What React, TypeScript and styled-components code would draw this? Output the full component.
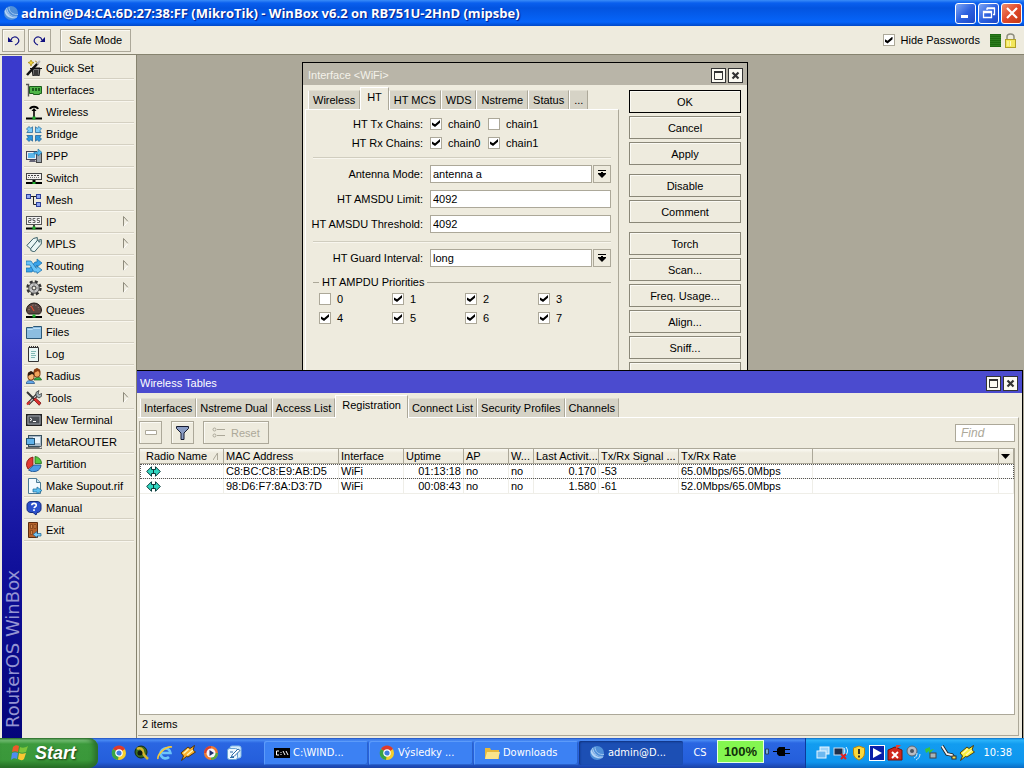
import React from "react";
import styled, { createGlobalStyle, css } from "styled-components";

const face = "#eeebde";
const faceDark = "#d6d3c6";
const line = "#aca899";
const canvas = "#aca899";

const Global = createGlobalStyle`
  * { box-sizing: border-box; }
  body {
    margin: 0;
    font-family: "Liberation Sans", Arial, sans-serif;
    font-size: 11px;
    line-height: 14px;
    color: #000;
    background: ${face};
  }
  button, input, select { font: inherit; color: inherit; margin: 0; }
  ul { list-style: none; margin: 0; padding: 0; }
`;

/* ---------- shell ---------- */

const Screen = styled.div`
  height: 100vh;
  display: flex;
  flex-direction: column;
  background: ${face};
  overflow: hidden;
`;

const TitleBar = styled.header`
  flex: none;
  height: 26px;
  display: flex;
  align-items: center;
  gap: 2px;
  padding: 0 2px 0 3px;
  color: #fff;
  font: bold 13px/18px "Open Sans", sans-serif;
  text-shadow: 1px 1px 1px #0a1883;
  background: linear-gradient(#3a8cf8 0, #0a5fee 3px, #0354e0 8px, #0560f2 18px, #0664fa 22px, #0148c8 26px);
`;

const AppTitle = styled.h1`
  flex: 1;
  margin: 0;
  font: inherit;
  white-space: nowrap;
`;

const XpButton = styled.button<{ $close?: boolean }>`
  width: 21px;
  height: 21px;
  padding: 0;
  display: grid;
  place-items: center;
  border: 1px solid #fff;
  border-radius: 3px;
  background: ${(p) =>
    p.$close
      ? "linear-gradient(135deg, #f0906c, #e0482a 50%, #c23a14)"
      : "linear-gradient(135deg, #7ea6f4, #2d62e0 50%, #1c48c8)"};
`;

const XpButtons = styled.div`
  display: flex;
  gap: 2px;
`;

const Toolbar = styled.div`
  flex: none;
  height: 29px;
  display: flex;
  align-items: center;
  gap: 3px;
  padding: 0 7px 0 2px;
  border-bottom: 1px solid #86836f;
`;

const ToolButton = styled.button<{ $wide?: boolean; $dim?: boolean }>`
  height: 23px;
  min-width: 23px;
  padding: ${(p) => (p.$wide ? "0 8px" : "0")};
  display: flex;
  align-items: center;
  justify-content: center;
  gap: 6px;
  white-space: nowrap;
  color: ${(p) => (p.$dim ? line : "#000")};
  background: ${face};
  border: 1px solid ${line};
  box-shadow: inset 1px 1px #fbfaf4;
`;

const Gap = styled.span`
  width: 3px;
`;

const Spacer = styled.span`
  flex: 1;
`;

const CheckLabel = styled.label`
  display: flex;
  align-items: center;
  gap: 6px;
  white-space: nowrap;
`;

const Check = styled.input.attrs({ type: "checkbox" })`
  appearance: none;
  flex: none;
  width: 12px;
  height: 12px;
  display: grid;
  place-items: center;
  border: 1px solid ${line};
  background: #fff;
  &:checked::before {
    content: "";
    width: 8px;
    height: 7px;
    background: #000;
    clip-path: polygon(0 35%, 38% 62%, 100% 0, 100% 38%, 38% 100%, 0 72%);
  }
`;

const Traffic = styled.span`
  width: 11px;
  height: 13px;
  margin-left: 7px;
  background: repeating-linear-gradient(#1d6a10 0 1px, #2c7c1e 1px 2px);
`;

const Workspace = styled.div`
  flex: 1;
  min-height: 0;
  display: flex;
`;

const Brand = styled.div`
  flex: none;
  width: 20px;
  margin: 1px 0 0 2px;
  padding: 0 0 0 2px;
  display: flex;
  align-items: flex-start;
  writing-mode: vertical-rl;
  background: linear-gradient(#3a3acc 0, #3a3acc 40%, #10109a 75%, #04047a 100%);
`;

const BrandText = styled.span`
  height: 100%;
  padding-top: 10px;
  transform: rotate(180deg);
  color: #9494d2;
  font: 18px/18px "DejaVu Sans", sans-serif;
`;

const Side = styled.nav`
  flex: none;
  width: 114px;
  padding: 2px 2px 0 2px;
`;

const Item = styled.a`
  height: 22px;
  display: flex;
  align-items: center;
  gap: 4px;
  padding: 0 5px 0 2px;
  color: #000;
  text-decoration: none;
  white-space: nowrap;
  border-bottom: 1px solid #d4d0c2;
  box-shadow: 0 1px #f8f6ee;
`;

const ItemText = styled.span`
  flex: 1;
`;

/* ---------- MDI windows ---------- */

const Desktop = styled.main`
  position: relative;
  flex: 1;
  min-width: 0;
  overflow: hidden;
  background: ${canvas};
  border-left: 1px solid #86836f;
`;

const windowFrame = css`
  position: absolute;
  display: flex;
  flex-direction: column;
  background: ${face};
`;

const DialogWindow = styled.section`
  ${windowFrame}
  left: 165px;
  top: 7px;
  width: 446px;
  border: 1px solid #000;
`;

const TablesWindow = styled.section`
  ${windowFrame}
  left: 0;
  right: 1px;
  top: 315px;
  bottom: 0;
  border-top: 1px solid #000;
  border-right: 1px solid #000;
`;

const WindowBar = styled.div<{ $active?: boolean }>`
  flex: none;
  height: 22px;
  display: flex;
  align-items: center;
  gap: 2px;
  padding: 2px 4px 0 ${(p) => (p.$active ? "3px" : "5px")};
  color: ${(p) => (p.$active ? "#fff" : "#f4f2ea")};
  background: ${(p) => (p.$active ? "#4b4bcf" : "#b9b5a8")};
`;

const WindowTitle = styled.h2`
  flex: 1;
  margin: 0;
  font: inherit;
`;

const WinButton = styled.button`
  width: 15px;
  height: 15px;
  padding: 0;
  display: grid;
  place-items: center;
  background: #fbfaf2;
  border: 1px solid #333;
`;

const TabRow = styled.div<{ $inset: number }>`
  flex: none;
  display: flex;
  align-items: flex-end;
  height: 24px;
  padding-left: ${(p) => p.$inset}px;
`;

const Tab = styled.button<{ $active?: boolean; $tight?: boolean }>`
  flex: none;
  height: ${(p) => (p.$active ? "23px" : "19px")};
  padding: 0 ${(p) => (p.$active ? 6 : p.$tight ? 3 : 4)}px ${(p) => (p.$active ? 5 : 0)}px;
  margin-bottom: ${(p) => (p.$active ? "-1px" : "0")};
  z-index: ${(p) => (p.$active ? 1 : 0)};
  white-space: nowrap;
  border: 0;
  border-top: 1px solid ${(p) => (p.$active ? "#fff" : "#e2dfd2")};
  border-right: 1px solid ${line};
  border-left: 1px solid #fff;
  background: ${(p) => (p.$active ? face : faceDark)};
`;

const DialogBody = styled.div`
  display: flex;
  gap: 10px;
  padding: 0 6px 0 2px;
`;

const DialogLeft = styled.div`
  flex: 1;
  min-width: 0;
  display: flex;
  flex-direction: column;
`;

const Panel = styled.div`
  flex: 1;
  padding: 4px 7px 0;
  border-top: 1px solid #fff;
  border-left: 1px solid #fff;
  border-right: 1px solid ${line};
`;

const FormRow = styled.div<{ $h: number }>`
  display: flex;
  align-items: center;
  gap: 7px;
  height: ${(p) => p.$h}px;
`;

const FormLabel = styled.label`
  flex: none;
  width: 110px;
  display: flex;
  justify-content: flex-end;
  white-space: nowrap;
`;

const Chains = styled.div`
  display: flex;
`;

const Chain = styled.div`
  width: 58px;
`;

const Rule = styled.hr`
  margin: 5px 0 2px;
  border: 0;
  height: 2px;
  border-top: 1px solid #d0cdbf;
  border-bottom: 1px solid #f8f6ee;
`;

const fieldBox = css`
  flex: 1;
  min-width: 0;
  height: 18px;
  padding: 0 2px;
  border: 1px solid ${line};
  border-radius: 0;
  background: #fff;
`;

const TextField = styled.input`
  ${fieldBox}
`;

const SelectField = styled.select`
  ${fieldBox}
  appearance: none;
`;

const Combo = styled.div`
  flex: 1;
  display: flex;
  gap: 1px;
`;

const DropButton = styled.button`
  width: 18px;
  height: 18px;
  padding: 0;
  display: grid;
  place-items: center;
  background: ${face};
  border: 1px solid ${line};
`;

const Priorities = styled.fieldset`
  min-width: 0;
  margin: 5px 0 0;
  padding: 0 0 0 6px;
  border: 0;
  border-top: 1px solid ${line};
  display: grid;
  grid-template-columns: repeat(3, 73px) 1fr;
`;

const Legend = styled.legend`
  padding: 0 3px;
`;

const PriorityCell = styled.div`
  height: 19px;
  display: flex;
  align-items: center;
`;

const ActionColumn = styled.div`
  flex: none;
  width: 112px;
  padding-top: 5px;
  display: flex;
  flex-direction: column;
  gap: 9px;
`;

const ActionGroup = styled.div`
  display: flex;
  flex-direction: column;
  gap: 3px;
`;

const ActionButton = styled.button<{ $main?: boolean }>`
  height: 23px;
  padding: 0;
  background: ${face};
  border: 1px solid ${(p) => (p.$main ? "#000" : "#8a8778")};
  box-shadow: inset 1px 1px #fbfaf4;
`;

const TablesBody = styled.div`
  flex: 1;
  min-height: 0;
  margin: 0 3px 2px 1px;
  display: flex;
  flex-direction: column;
  border-top: 1px solid #fff;
  border-right: 1px solid ${line};
  border-bottom: 1px solid ${line};
  padding: 3px 3px 0 1px;
`;

const TableTools = styled.div`
  display: flex;
  align-items: center;
  gap: 9px;
  height: 23px;
  margin-bottom: 4px;
`;

const FindField = styled.input`
  width: 60px;
  height: 18px;
  padding: 0 5px;
  border: 1px solid ${line};
  background: #fff;
  font-size: 12px;
  font-style: italic;
  &::placeholder { color: ${line}; opacity: 1; }
`;

const ListBox = styled.div`
  flex: 1;
  min-height: 0;
  overflow: hidden;
  background: #fff;
  border: 1px solid ${line};
`;

const Grid = styled.table`
  width: 100%;
  table-layout: fixed;
  border-spacing: 0;
`;

const Th = styled.th`
  height: 15px;
  padding: 0 0 0 2px;
  font-weight: normal;
  text-align: left;
  white-space: nowrap;
  overflow: hidden;
  text-overflow: ellipsis;
  background: linear-gradient(#fbfaf4, #eeebde 4px);
  border-right: 1px solid ${line};
  border-bottom: 1px solid ${line};
  svg { display: block; }
`;

const HeadSplit = styled.span`
  display: flex;
  justify-content: space-between;
  align-items: center;
  padding: 0 5px 0 4px;
`;

const Td = styled.td<{ $right?: boolean }>`
  height: 15px;
  padding: 0 2px;
  text-align: ${(p) => (p.$right ? "right" : "left")};
  white-space: nowrap;
  border-right: 1px solid #efeee8;
  border-bottom: 1px solid #efeee8;
`;

const Row = styled.tr<{ $focused?: boolean }>`
  ${(p) => p.$focused && "outline: 1px dotted #555; outline-offset: -1px;"}
`;

const Status = styled.div`
  flex: none;
  height: 20px;
  padding: 2px 3px;
`;

/* ---------- taskbar ---------- */

const Taskbar = styled.footer`
  flex: none;
  height: 30px;
  display: flex;
  align-items: stretch;
  color: #fff;
  font: 11px/14px "DejaVu Sans Condensed", "DejaVu Sans", sans-serif;
  background: linear-gradient(#1f4fc0 0, #4a8cf4 2px, #2a66e2 5px, #245edb 24px, #1941a5 30px);
`;

const Start = styled.button`
  width: 98px;
  padding: 0 0 0 10px;
  display: flex;
  align-items: center;
  gap: 6px;
  border: 0;
  border-radius: 0 9px 9px 0;
  color: #fff;
  font: italic bold 18px/22px "Liberation Sans", sans-serif;
  text-shadow: 1px 1px 2px #1a3a10;
  background: linear-gradient(#2b6e2b 0, #7cc67c 2px, #3c9a3c 6px, #3a983a 22px, #256f25 30px);
  box-shadow: inset -4px 0 5px #2a6e2a;
`;

const Quick = styled.div`
  display: flex;
  align-items: center;
  gap: 7px;
  width: 166px;
  padding-left: 13px;
`;

const Tasks = styled.div`
  display: flex;
  align-items: center;
  gap: 1px;
`;

const Task = styled.button<{ $active?: boolean }>`
  width: 104px;
  height: 24px;
  padding: 0 0 0 10px;
  display: flex;
  align-items: center;
  gap: 3px;
  border: 0;
  border-radius: 2px;
  color: #fff;
  white-space: nowrap;
  background: ${(p) => (p.$active ? "#1c4fb4" : "#3c81f3")};
  box-shadow: ${(p) =>
    p.$active
      ? "inset 1px 1px 2px #0f3380"
      : "inset 1px 1px #5c9bfa, inset -1px -1px #2a62cc"};
`;

const Lang = styled.div`
  width: 34px;
  display: grid;
  place-items: center;
`;

const Battery = styled.div`
  align-self: flex-start;
  margin-top: 2px;
  width: 47px;
  height: 23px;
  display: grid;
  place-items: center;
  color: #10300a;
  font: bold 13px/16px "Liberation Sans", sans-serif;
  background: #84f650;
  border: 1px solid #e8ffe0;
`;

const Plug = styled.div`
  width: 41px;
  padding: 8px 0 0 1px;
`;

const Tray = styled.div`
  flex: 1;
  display: flex;
  align-items: center;
  gap: 2px;
  padding: 0 12px 0 9px;
  border-left: 1px solid #0b3a9c;
  background: linear-gradient(#0c70c8 0, #2cb4fa 2px, #129cf0 6px, #0f96ee 24px, #0a6cc4 30px);
`;

const Clock = styled.time`
  margin-left: auto;
`;

/* ---------- icons ---------- */

type IconProps = { children: React.ReactNode; size?: number };
const Icon = ({ children, size = 16 }: IconProps) => (
  <svg width={size} height={size} viewBox="0 0 16 16" aria-hidden="true" fill="none">
    {children}
  </svg>
);

const MikroTikBall = () => (
  <Icon>
    <circle cx="8" cy="8" r="7" fill="#4f8fd8" />
    <path d="M1.500 6c1 6 6 8 12 7l1-2C9 12 5 9 4 2.500z" fill="#b4d4f6" />
    <path d="M6 2c0 5 4 8 9 7.500" stroke="#9cc4f0" />
    <path d="M3 4c1 5 5 8.500 11 8" stroke="#5c94d8" strokeWidth=".8" />
  </Icon>
);

const BasePlug = () => (
  <>
    <path d="M0 14.500h16" stroke="#000" strokeWidth="2" />
    <path d="M8 11v3" stroke="#000" strokeWidth="1.500" />
    <rect x="6.500" y="12.500" width="3" height="3" fill="#1fae2c" />
  </>
);

const icons: Record<string, React.ReactNode> = {
  quick: (
    <>
      <path d="M6 8h8l-1 8H7z" fill="#777" stroke="#111" />
      <path d="M4 8.500h12M9 10v5M11 10v5" stroke="#111" strokeWidth="1.200" />
      <path d="M1 15 12 3" stroke="#111" strokeWidth="2.500" />
      <path d="M11 4l3-3" stroke="#bbb" strokeWidth="2" />
      <path d="m5 0 1 2 2 .5-2 1-1 2.500-1-2.500-2-1 2-.5zM9 1l2 1" fill="#f4d93c" stroke="#a58a10" strokeWidth=".7" />
    </>
  ),
  interfaces: (
    <>
      <path d="M0 2.500h2.500v12" stroke="#555" strokeWidth="1.400" />
      <path d="M3.500 4.500h12v7h-2v1h-6v-1h-4z" fill="#4fb547" stroke="#1b5e1b" />
      <path d="M6 6h2v3H6zM9 6h2v3H9zM12 6h2v3h-2z" fill="#1b5e1b" />
    </>
  ),
  wireless: (
    <>
      <path d="M4 5c1-3 7-3 8 0" stroke="#000" strokeWidth="2" />
      <path d="M8 5v8" stroke="#000" strokeWidth="1.600" />
      <path d="m5.500 7 2.500-3 2.500 3z" fill="#000" />
      <path d="M0 14.500h16" stroke="#000" strokeWidth="2" />
      <rect x="6.500" y="12.500" width="3" height="3" fill="#1fae2c" />
    </>
  ),
  bridge: (
    <g stroke="#145a92" strokeWidth=".7">
      <path d="M.5 3 3 .5 4.800 2.300 6.500.8V6.500H.8L2.300 4.800z" fill="#7cccf8" />
      <path d="M15.500 3 13 .5l-1.800 1.800L9.500.8V6.500h5.700l-1.500-1.700z" fill="#7cccf8" />
      <path d="M.5 13 3 15.500l1.800-1.800 1.700 1.500V9.500H.8l1.500 1.700z" fill="#2f98dc" />
      <path d="M15.500 13 13 15.500l-1.800-1.800-1.700 1.500V9.500h5.700l-1.500 1.700z" fill="#2f98dc" />
    </g>
  ),
  ppp: (
    <>
      <rect x="10.500" y="5.500" width="5" height="9" fill="#9aa4ad" stroke="#444" />
      <rect x=".5" y="3.500" width="10" height="8" fill="#e8eef2" stroke="#445" />
      <rect x="2" y="5" width="7" height="5" fill="#5cb6ea" />
      <path d="M3 14h7l-1-2H4z" fill="#667" />
      <path d="M8 4h4V1l4 3.500L12 8V6H8z" fill="#54b8f0" stroke="#166a9c" strokeWidth=".6" />
    </>
  ),
  switch: (
    <>
      <rect x=".5" y="3.500" width="15" height="6" fill="#f2f0ee" stroke="#444" />
      <path d="M2 5.500h12" stroke="#444" strokeWidth="1" strokeDasharray="2 1" />
      <path d="M2 7.500h12" stroke="#777" strokeWidth="1" strokeDasharray="1 1" />
      <path d="M0 13h16" stroke="#000" strokeWidth="2" />
      <path d="M8 10v2" stroke="#000" strokeWidth="3" />
      <rect x="6.500" y="12" width="3" height="2" fill="#1fae2c" />
    </>
  ),
  mesh: (
    <>
      <path d="M4 4.500h8M7.500 4v8.500h4" stroke="#222" />
      <g fill="#8fa6f0" stroke="#2c3f9c">
        <rect x=".5" y="2.500" width="4" height="4" />
        <rect x="10.500" y="2.500" width="4" height="4" />
        <rect x="10.500" y="10.500" width="4" height="4" />
      </g>
    </>
  ),
  ip: (
    <>
      <rect x=".5" y="2.500" width="15" height="8" fill="#f4f4f4" stroke="#555" />
      <path d="M2.500 4.500H5V6.500H2.500V8.500H5.200M9.300 4.500H7V6.500H9V8.500H6.600M13.700 4.500h-2.400v2H13.500v2h-2.500" stroke="#555" strokeWidth=".9" />
      <BasePlug />
    </>
  ),
  mpls: (
    <g fill="#e9f6f6" stroke="#3b5f66">
      <path d="m.8 9.500 6.500-7 4-1v4.500l-6.500 7z" />
      <path d="m4.800 12.500 6.500-8 4-1v4.500l-7 8-3.500-1.500z" />
      <circle cx="13.200" cy="5.600" r=".6" />
    </g>
  ),
  routing: (
    <g stroke="#136aa8" strokeWidth=".7">
      <path d="M0 10h4l5-6h2V1l5 4-5 4V7l-5 7H0z" fill="#3aa3ea" />
      <path d="M0 3h5l5 7h1V8l5 4-5 3.500V14H8L4 7H0z" fill="#69c3f8" />
    </g>
  ),
  system: (
    <>
      <circle cx="8" cy="8" r="6.300" stroke="#333" strokeWidth="2.800" strokeDasharray="2.850 2.100" />
      <circle cx="8" cy="8" r="5.300" fill="#c4c4c4" stroke="#555" />
      <circle cx="8" cy="8" r="2" fill="#eeebde" stroke="#333" />
      <path d="M8 3v2.500M8 10.500V13M3 8h2.500M10.500 8H13" stroke="#888" />
    </>
  ),
  queues: (
    <>
      <path d="M.5 8a7.500 7 0 0 1 15 0c0 2-1 3-2 4h-11c-1-1-2-2-2-4z" fill="#5b4742" stroke="#221a18" />
      <path d="M3 8a5 5 0 0 1 10 0" stroke="#b89a90" strokeDasharray="1 2" />
      <path d="M8 9 5 4" stroke="#e04a2c" strokeWidth="1.200" />
      <path d="M0 15h16" stroke="#000" strokeWidth="2" />
      <rect x="6.500" y="12.500" width="3" height="3" fill="#1fae2c" />
    </>
  ),
  files: (
    <>
      <path d="M.5 3.500v11h15v-12h-8l-1 1h-6z" fill="#8cbde0" stroke="#2c5878" />
      <path d="M1.500 5.500h5l1-1h7" stroke="#bfe0f5" />
    </>
  ),
  log: (
    <>
      <path d="M2.500 1.500h10v14h-10z" fill="#eaf7f5" stroke="#333" />
      <path d="M3 1h10" stroke="#333" strokeWidth="2" strokeDasharray="1 1" />
      <path d="M5 5.500h5M5 7.500h4M5 9.500h5M5 11.500h4" stroke="#7fb9b4" />
    </>
  ),
  radius: (
    <>
      <path d="M8 12c0-3 7-4 7.500 0z" fill="#37b04a" stroke="#1b5e1b" strokeWidth=".7" />
      <rect x="8" y="1" width="6" height="8" rx="2.500" fill="#f2a35c" stroke="#7a3a10" />
      <path d="M8 5V2l3-2 3 2v3l-2-2z" fill="#8a3c10" />
      <path d="M0 15.500c0-4 8.500-4 8.500 0z" fill="#62a8ea" stroke="#1d4c80" strokeWidth=".7" />
      <rect x="2" y="4" width="6" height="8" rx="2.500" fill="#f7b676" stroke="#7a3a10" />
      <path d="M2 8V5l3-2 3 2v2L6 6z" fill="#2b1a10" />
    </>
  ),
  tools: (
    <>
      <path d="M2 14 11 5" stroke="#333" strokeWidth="3.200" />
      <path d="M2 14 11 5" stroke="#c8c8c8" strokeWidth="1.200" />
      <path d="M10 6V2.500L13 .5l-1 3 1.500 1 2.300-1V6L13 8z" fill="#a8b8bc" stroke="#333" strokeWidth=".8" />
      <path d="m1 2 8 8" stroke="#333" strokeWidth="2" />
      <path d="m7.500 9.500 2-1.500 5.500 5-1.800 2.300z" fill="#e03030" stroke="#7a1010" strokeWidth=".8" />
      <path d="m1 14.500 3-3" stroke="#d23030" strokeWidth="2.200" />
    </>
  ),
  terminal: (
    <>
      <rect x=".5" y="2.500" width="15" height="11" fill="#4a4f55" stroke="#222" />
      <path d="M2 4h12v8H2z" stroke="#9aa0a6" />
      <path d="m4 6 2 1.500L4 9M7 9.500h3" stroke="#fff" />
    </>
  ),
  meta: (
    <>
      <rect x="2.500" y="1.500" width="13" height="11" fill="#a9bac8" stroke="#38505f" />
      <rect x="7" y="3" width="7" height="6" fill="#eaf4fa" />
      <rect x=".5" y="4.500" width="8" height="6" fill="#60b2ea" stroke="#24506e" />
      <path d="M0 13.500h13l3-2v3H0z" fill="#e6e6e6" stroke="#555" strokeWidth=".8" />
    </>
  ),
  partition: (
    <>
      <path d="M7 1v8l-5 4A7.500 7.500 0 0 1 7 1z" fill="#e23a34" stroke="#7c1410" strokeWidth=".8" />
      <path d="M9 .5a7 7 0 0 1 6.500 7H9z" fill="#55c840" stroke="#1c6a14" strokeWidth=".8" />
      <path d="M15 9a7.500 7 0 0 1-12.500 5L8 9z" fill="#4c9ae6" stroke="#164a86" strokeWidth=".8" />
    </>
  ),
  supout: (
    <>
      <path d="M2.500.5h8l4 4v11h-12z" fill="#f2fafe" stroke="#4c7a94" />
      <path d="M10.500.5v4h4" fill="#bfe0f0" stroke="#4c7a94" />
      <path d="M7 11h4V9l5 3.500-5 3.500v-2H7z" fill="#5cc0f2" stroke="#17689a" strokeWidth=".7" />
    </>
  ),
  manual: (
    <>
      <path d="M5 1.500h6c2.500 0 4 1.500 4 3.500v4c0 2-1.500 3.500-4 3.500L10 15l-3-2.500H5C2.500 12.500 1 11 1 9V5c0-2 1.500-3.500 4-3.500z" fill="#2c50cc" stroke="#122a80" />
      <path d="M5.800 5.200c0-2.500 4.500-2.500 4.500 0 0 1.500-2 1.500-2.200 3M8 9.300V11" stroke="#fff" strokeWidth="1.600" />
    </>
  ),
  exit: (
    <>
      <path d="M2.500.5h9v15h-9z" fill="#b5622c" stroke="#5c2c0e" />
      <path d="M4.500 2.500h2v4h-2zM8 2.500h2v4H8zM4.500 8.500h2v4h-2z" stroke="#7a3c14" fill="#d08448" strokeWidth=".7" />
      <path d="M15 11.500h-4V9.500l-4 3 4 3V14h4z" fill="#7ccaf4" stroke="#1b6292" strokeWidth=".7" />
    </>
  ),
};

const Chrome = () => (
  <Icon>
    <circle cx="8" cy="8" r="7" fill="#f6cf2c" />
    <path d="M8 8 2 4a7 7 0 0 1 12 0z" fill="#de3a2c" />
    <path d="M8 8 2 4a7 7 0 0 0 5 11z" fill="#38a445" />
    <circle cx="8" cy="8" r="3.200" fill="#3f7de0" stroke="#fff" strokeWidth="1.200" />
  </Icon>
);

const Bolt = ({ light }: { light?: boolean }) => (
  <Icon>
    <path
      d="M1 8 8 2l2 1.500L14.500.5 13 5l2.500 2L8 12l-1.500-.5L1.500 15.500 3.500 11z"
      fill={light ? "#f6f03c" : "#fbb02c"}
      stroke="#4a2c00"
      strokeWidth=".9"
    />
    <path d="m3.500 8.500 5-4.500M7 10l6-5" stroke="#fff6b8" strokeWidth="1.300" />
  </Icon>
);

const Maximize = () => (
  <svg width="11" height="11" viewBox="0 0 11 11" aria-hidden="true" fill="none">
    <path d="M1.500 1.500h8v8h-8z" stroke="#333" />
    <path d="M1 2h9" stroke="#333" strokeWidth="2" />
  </svg>
);

const CloseX = () => (
  <svg width="11" height="11" viewBox="0 0 11 11" aria-hidden="true">
    <path d="m2.500 2.500 6 6m0-6-6 6" stroke="#333" strokeWidth="2.200" />
  </svg>
);

const DropArrow = () => (
  <svg width="8" height="8" viewBox="0 0 8 8" aria-hidden="true">
    <path d="M0 0h8v1H0zM3 2h2v1h3v1L4 8 0 4V3h3z" fill="#000" />
  </svg>
);

const Submenu = () => (
  <svg width="6" height="11" viewBox="0 0 6 11" aria-hidden="true" fill="none">
    <path d="M.5 10.500V.5L5 5.500" stroke="#8e8b7c" />
    <path d="M5 5.500.5 10.500" stroke="#fff" />
  </svg>
);

const Undo = ({ flip }: { flip?: boolean }) => (
  <svg width="13" height="13" viewBox="0 0 13 13" aria-hidden="true" fill="none">
    <g transform={flip ? "matrix(-1 0 0 1 13 0)" : undefined}>
      <path d="M4 6c1-3.500 5-4 7-1.500s0 5.500-3 6.500" stroke="#101080" strokeWidth="1.200" />
      <path d="M1 3v5h5z" fill="#101080" />
    </g>
  </svg>
);

const Lock = () => (
  <svg width="13" height="15" viewBox="0 0 13 15" aria-hidden="true" fill="none">
    <path d="M3 7V4c0-4 7-4 7 0v3" stroke="#8c8c7c" strokeWidth="1.500" />
    <rect x="1.500" y="6.500" width="10" height="8" fill="#f3e75c" stroke="#b0a028" />
    <path d="M4 8v5M6.500 8v5" stroke="#fffbc0" />
  </svg>
);

const Registered = () => (
  <svg width="15" height="11" viewBox="0 0 15 11" aria-hidden="true">
    <path d="M.7 5.500 5.500.7V3.500h4V.7l4.800 4.800-4.800 4.800V7.500h-4v2.800z" fill="#2fd6c0" stroke="#0a3a3a" />
    <path d="M7.500 3.500v4" stroke="#0a3a3a" />
  </svg>
);

/* ---------- data ---------- */

const menu: [string, string, boolean?][] = [
  ["quick", "Quick Set"],
  ["interfaces", "Interfaces"],
  ["wireless", "Wireless"],
  ["bridge", "Bridge"],
  ["ppp", "PPP"],
  ["switch", "Switch"],
  ["mesh", "Mesh"],
  ["ip", "IP", true],
  ["mpls", "MPLS", true],
  ["routing", "Routing", true],
  ["system", "System", true],
  ["queues", "Queues"],
  ["files", "Files"],
  ["log", "Log"],
  ["radius", "Radius"],
  ["tools", "Tools", true],
  ["terminal", "New Terminal"],
  ["meta", "MetaROUTER"],
  ["partition", "Partition"],
  ["supout", "Make Supout.rif"],
  ["manual", "Manual"],
  ["exit", "Exit"],
];

const dialogTabs = ["Wireless", "HT", "HT MCS", "WDS", "Nstreme", "Status", "..."];
const tableTabs = [
  "Interfaces",
  "Nstreme Dual",
  "Access List",
  "Registration",
  "Connect List",
  "Security Profiles",
  "Channels",
];
const actions = [
  ["OK", "Cancel", "Apply"],
  ["Disable", "Comment"],
  ["Torch", "Scan...", "Freq. Usage...", "Align...", "Sniff...", "Snooper..."],
];
const columns = [84, 115, 65, 60, 45, 25, 65, 80, 134];
const clients = [
  ["C8:BC:C8:E9:AB:D5", "WiFi", "01:13:18", "no", "no", "0.170", "-53", "65.0Mbps/65.0Mbps"],
  ["98:D6:F7:8A:D3:7D", "WiFi", "00:08:43", "no", "no", "1.580", "-61", "52.0Mbps/65.0Mbps"],
];

const WindowControls = () => (
  <>
    <WinButton aria-label="Maximize"><Maximize /></WinButton>
    <WinButton aria-label="Close"><CloseX /></WinButton>
  </>
);

const ChainBoxes = ({ first, second }: { first: boolean; second: boolean }) => (
  <Chains>
    <Chain><CheckLabel><Check defaultChecked={first} />chain0</CheckLabel></Chain>
    <Chain><CheckLabel><Check defaultChecked={second} />chain1</CheckLabel></Chain>
  </Chains>
);

const ComboRow = ({ id, label, value }: { id: string; label: string; value: string }) => (
  <FormRow $h={25}>
    <FormLabel htmlFor={id}>{label}</FormLabel>
    <Combo>
      <SelectField id={id}><option>{value}</option></SelectField>
      <DropButton aria-label={`Open ${label}`}><DropArrow /></DropButton>
    </Combo>
  </FormRow>
);

const TextRow = ({ id, label, value }: { id: string; label: string; value: string }) => (
  <FormRow $h={25}>
    <FormLabel htmlFor={id}>{label}</FormLabel>
    <TextField id={id} defaultValue={value} />
  </FormRow>
);

const InterfaceDialog = () => (
  <DialogWindow>
    <WindowBar>
      <WindowTitle>Interface &lt;WiFi&gt;</WindowTitle>
      <WindowControls />
    </WindowBar>
    <DialogBody>
      <DialogLeft>
        <TabRow $inset={3}>
          {dialogTabs.map((t) => <Tab key={t} $active={t === "HT"}>{t}</Tab>)}
        </TabRow>
        <Panel>
          <FormRow $h={19}>
            <FormLabel as="span">HT Tx Chains:</FormLabel>
            <ChainBoxes first second={false} />
          </FormRow>
          <FormRow $h={19}>
            <FormLabel as="span">HT Rx Chains:</FormLabel>
            <ChainBoxes first second />
          </FormRow>
          <Rule />
          <ComboRow id="antenna" label="Antenna Mode:" value="antenna a" />
          <TextRow id="limit" label="HT AMSDU Limit:" value="4092" />
          <TextRow id="threshold" label="HT AMSDU Threshold:" value="4092" />
          <Rule />
          <ComboRow id="guard" label="HT Guard Interval:" value="long" />
          <Priorities>
            <Legend>HT AMPDU Priorities</Legend>
            {[0, 1, 2, 3, 4, 5, 6, 7].map((n) => (
              <PriorityCell key={n}>
                <CheckLabel><Check defaultChecked={n > 0} />{n}</CheckLabel>
              </PriorityCell>
            ))}
          </Priorities>
        </Panel>
      </DialogLeft>
      <ActionColumn>
        {actions.map((group) => (
          <ActionGroup key={group[0]}>
            {group.map((a) => <ActionButton key={a} $main={a === "OK"}>{a}</ActionButton>)}
          </ActionGroup>
        ))}
      </ActionColumn>
    </DialogBody>
  </DialogWindow>
);

const heads = ["MAC Address", "Interface", "Uptime", "AP", "W...", "Last Activit...", "Tx/Rx Signal ...", "Tx/Rx Rate"];

const WirelessTables = () => (
  <TablesWindow>
    <WindowBar $active>
      <WindowTitle>Wireless Tables</WindowTitle>
      <WindowControls />
    </WindowBar>
    <TabRow $inset={3}>
      {tableTabs.map((t) => <Tab key={t} $tight $active={t === "Registration"}>{t}</Tab>)}
    </TabRow>
    <TablesBody>
      <TableTools>
        <ToolButton $dim aria-label="Remove">
          <svg width="12" height="5" viewBox="0 0 12 5" aria-hidden="true">
            <path d="M.5.5h11v4H.5z" fill="#fff" stroke="#aca899" />
          </svg>
        </ToolButton>
        <ToolButton aria-label="Filter">
          <svg width="13" height="14" viewBox="0 0 13 14" aria-hidden="true">
            <path d="M.5.500h12v2L8 7v6.500H5V7L.5 2.500z" fill="#8a9cc4" stroke="#151a30" />
          </svg>
        </ToolButton>
        <ToolButton $wide $dim>
          <svg width="13" height="11" viewBox="0 0 13 11" aria-hidden="true" fill="none" stroke="#aca899">
            <circle cx="2.500" cy="2.500" r="1.500" />
            <circle cx="2.500" cy="8.500" r="1.500" />
            <path d="M5 2.500h8M5 8.500h8" />
          </svg>
          Reset
        </ToolButton>
        <Spacer />
        <FindField placeholder="Find" aria-label="Find" />
      </TableTools>
      <ListBox>
        <Grid>
          <colgroup>
            {columns.map((w, i) => <col key={i} width={w} />)}
            <col />
            <col width="15" />
          </colgroup>
          <thead>
            <tr>
              <Th>
                <HeadSplit>
                  Radio Name
                  <svg width="5" height="7" viewBox="0 0 5 7" aria-hidden="true">
                    <path d="M0 7 4.500 0v7" stroke="#aca899" fill="none" />
                  </svg>
                </HeadSplit>
              </Th>
              {heads.map((h) => <Th key={h}>{h}</Th>)}
              <Th />
              <Th>
                <svg width="9" height="5" viewBox="0 0 9 5" aria-label="Columns"><path d="M0 0h9L4.500 5z" fill="#000" /></svg>
              </Th>
            </tr>
          </thead>
          <tbody>
            {clients.map((c, r) => (
              <Row key={c[0]} $focused={r === 0}>
                <Td><HeadSplit><Registered /></HeadSplit></Td>
                {c.map((v, i) => <Td key={i} $right={i === 2 || i === 5}>{v}</Td>)}
                <Td />
                <Td />
              </Row>
            ))}
          </tbody>
        </Grid>
      </ListBox>
      <Status>2 items</Status>
    </TablesBody>
  </TablesWindow>
);

const WindowsTaskbar = () => (
  <Taskbar>
    <Start>
      <svg width="19" height="18" viewBox="0 0 19 18" aria-hidden="true">
        <path d="M3 3c2-2 4-2 6-1L8 8C6 7 4 7 2 8z" fill="#ee5a2a" />
        <path d="M10 3c2 1 5 1 8-1l-2 6c-3 1-5 1-7 0z" fill="#7cc53a" />
        <path d="M2 9c2-1 4-1 6 0l-1 6c-2-1-4-1-6 1z" fill="#4f8cf0" />
        <path d="M9 9c2 1 4 1 7 0l-2 6c-2 2-4 1-6 0z" fill="#fbc832" />
      </svg>
      Start
    </Start>
    <Quick>
      <Chrome />
      <Icon>
        <circle cx="7" cy="7" r="6" fill="#3c6a20" stroke="#1a2a08" />
        <path d="M3 4c3-2 6 0 6 3s2 4 5 7" stroke="#d6b52c" strokeWidth="2.500" />
        <circle cx="6" cy="8" r="2.500" fill="#101a10" />
      </Icon>
      <Icon>
        <path d="M12 12a5 5 0 1 1 1.500-4H5" stroke="#6cc4fa" strokeWidth="2.600" />
        <path d="M1 14C0 10 8 1 15 2" stroke="#f6c838" strokeWidth="1.600" />
      </Icon>
      <Bolt />
      <Icon>
        <circle cx="8" cy="8" r="7" fill="#f07a30" />
        <path d="M8 1a7 7 0 0 0-7 7h7z" fill="#d8402c" />
        <path d="M8 15a7 7 0 0 0 7-7H8z" fill="#58a840" />
        <circle cx="8" cy="8" r="4.500" fill="#f4f4ff" />
        <path d="m6.500 5 4.500 3-4.500 3z" fill="#1c2c6c" />
      </Icon>
      <Icon>
        <rect x="4" y="1" width="11" height="12" rx="2" fill="#d8ecfa" stroke="#8cc0e8" />
        <rect x="1.500" y="3.500" width="10" height="11" rx="2" fill="#eef8ff" stroke="#6aa4d4" />
        <path d="m6 10 6-6 2 1.500-6 6-2.500.5z" fill="#fff" stroke="#2c6ca8" />
        <path d="M4 7h3M4 12.500h4" stroke="#2c6ca8" />
      </Icon>
    </Quick>
    <Tasks>
      <Task>
        <Icon>
          <rect x="0" y="3" width="16" height="10" fill="#000" />
          <path d="M5 6H2.500v4H5M7 7v1M7 9v1M9 6l2 4M12 6l2 4" stroke="#fff" />
        </Icon>
        C:\WIND...
      </Task>
      <Task><Chrome />Výsledky ...</Task>
      <Task>
        <Icon>
          <path d="M1 3h5l1 2h8v9H1z" fill="#e8b93c" />
          <path d="m1 14 2-7h13l-2 7z" fill="#fbe48c" />
        </Icon>
        Downloads
      </Task>
      <Task $active><MikroTikBall />admin@D...</Task>
    </Tasks>
    <Lang>CS</Lang>
    <Battery>100%</Battery>
    <Plug>
      <svg width="25" height="12" viewBox="0 0 25 12" aria-hidden="true">
        <path d="M.5 3h3v5h-3z" fill="#7cb0d8" stroke="#234" strokeWidth=".8" />
        <path d="M8 5h4V3l2-2h6v2h5v1h-5v3h5v1h-5v2h-6l-2-2V6H8z" fill="#000" />
      </svg>
    </Plug>
    <Tray>
      <Icon>
        <rect x="5" y="2" width="9" height="7" fill="#9cd4fa" stroke="#e8f6ff" />
        <rect x="2" y="6" width="9" height="7" fill="#6cb8f0" stroke="#e8f6ff" />
      </Icon>
      <Icon>
        <rect x="1" y="3" width="9" height="7" fill="#20304a" stroke="#cfe0f0" />
        <path d="M11 3c1 2 1 4 0 6M13 2c2 3 2 5 0 8" stroke="#e8f6ff" />
        <path d="m8 9 5 5m0-5-5 5" stroke="#e02020" strokeWidth="2" />
      </Icon>
      <Icon>
        <path d="M8 1 2.500 3v5c0 4 3 6 5.500 7 2.500-1 5.500-3 5.500-7V3z" fill="#fbd83c" stroke="#b8860b" />
        <path d="M8 4v5M8 10.500v2" stroke="#222" strokeWidth="1.800" />
      </Icon>
      <Icon>
        <rect x=".5" y=".5" width="15" height="15" fill="#0a20a8" stroke="#fff" />
        <path d="m4 3 9 5-9 5z" fill="#fff" />
      </Icon>
      <Icon>
        <path d="M1 5 8 2l7 3v10H1z" fill="#d0281c" stroke="#7c1008" />
        <path d="M9 4V0h5l-2 2" fill="#e84030" />
        <path d="m5 7 6 6m0-6-6 6" stroke="#fff" strokeWidth="2" />
      </Icon>
      <Icon>
        <circle cx="7" cy="6" r="5" fill="#b8bcc4" stroke="#5c6470" />
        <circle cx="7" cy="6" r="2" fill="#4c5460" />
        <path d="M12 8c0 3-1 4-3 5M15 9c0 3-2 5-4 6" stroke="#cfe6fa" />
      </Icon>
      <Icon>
        <path d="M2 4 7 2v3l4-1-5 5V6L3 8z" fill="#3cc43c" />
        <rect x="7" y="8" width="6" height="5" fill="#a8b4b8" stroke="#444" />
      </Icon>
      <Icon>
        <path d="m1 1 5 8 5 1 2 3" stroke="#222" strokeWidth="3.600" />
        <path d="m1 1 5 8 5 1 1 2" stroke="#f4f4f4" strokeWidth="1.800" />
        <rect x="11" y="11" width="4" height="3" fill="#f4dc50" stroke="#333" />
      </Icon>
      <Bolt light />
      <Clock>10:38</Clock>
    </Tray>
  </Taskbar>
);

export default function App() {
  return (
    <Screen>
      <Global />
      <TitleBar>
        <MikroTikBall />
        <AppTitle>admin@D4:CA:6D:27:38:FF (MikroTik) - WinBox v6.2 on RB751U-2HnD (mipsbe)</AppTitle>
        <XpButtons>
          <XpButton aria-label="Minimize">
            <Icon><path d="M3 11.500h7" stroke="#fff" strokeWidth="3" /></Icon>
          </XpButton>
          <XpButton aria-label="Restore">
            <Icon><path d="M6 5V3.500h7.500v6H12M2.500 6.500h8v6h-8zM2 7.500h9M6 3h8" stroke="#fff" strokeWidth="1.300" /></Icon>
          </XpButton>
          <XpButton $close aria-label="Close">
            <Icon><path d="m3 3 10 10M13 3 3 13" stroke="#fff" strokeWidth="2.200" /></Icon>
          </XpButton>
        </XpButtons>
      </TitleBar>
      <Toolbar>
        <ToolButton aria-label="Undo"><Undo /></ToolButton>
        <ToolButton aria-label="Redo"><Undo flip /></ToolButton>
        <Gap />
        <ToolButton $wide>Safe Mode</ToolButton>
        <Spacer />
        <CheckLabel><Check defaultChecked />Hide Passwords</CheckLabel>
        <Traffic />
        <Lock />
      </Toolbar>
      <Workspace>
        <Brand><BrandText>RouterOS WinBox</BrandText></Brand>
        <Side>
          <ul>
            {menu.map(([id, label, sub]) => (
              <li key={id}>
                <Item href="#">
                  <Icon>{icons[id]}</Icon>
                  <ItemText>{label}</ItemText>
                  {sub && <Submenu />}
                </Item>
              </li>
            ))}
          </ul>
        </Side>
        <Desktop>
          <InterfaceDialog />
          <WirelessTables />
        </Desktop>
      </Workspace>
      <WindowsTaskbar />
    </Screen>
  );
}
